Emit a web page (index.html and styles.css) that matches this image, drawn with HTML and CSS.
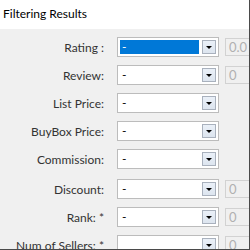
FILE: index.html
```html
<!DOCTYPE html>
<html>
<head>
<meta charset="utf-8">
<link rel="stylesheet" href="styles.css">
</head>
<body>
<div class="window">
  <div class="title">Filtering Results</div>
  <div class="panel">
    <div class="row">
      <span class="label">Rating :</span>
      <div class="combo"><span class="value selected">-</span><span class="btn"><i class="arrow"></i></span></div>
      <div class="box">0.0</div>
    </div>
    <div class="row">
      <span class="label">Review:</span>
      <div class="combo"><span class="value">-</span><span class="btn"><i class="arrow"></i></span></div>
      <div class="box">0</div>
    </div>
    <div class="row">
      <span class="label">List Price:</span>
      <div class="combo"><span class="value">-</span><span class="btn"><i class="arrow"></i></span></div>
    </div>
    <div class="row">
      <span class="label">BuyBox Price:</span>
      <div class="combo"><span class="value">-</span><span class="btn"><i class="arrow"></i></span></div>
    </div>
    <div class="row">
      <span class="label">Commission:</span>
      <div class="combo"><span class="value">-</span><span class="btn"><i class="arrow"></i></span></div>
    </div>
    <div class="row sep">
      <span class="label">Discount:</span>
      <div class="combo"><span class="value">-</span><span class="btn"><i class="arrow"></i></span></div>
      <div class="box">0</div>
    </div>
    <div class="row">
      <span class="label">Rank: *</span>
      <div class="combo"><span class="value">-</span><span class="btn"><i class="arrow"></i></span></div>
      <div class="box">0</div>
    </div>
    <div class="row">
      <span class="label">Num of Sellers: *</span>
      <div class="combo"><span class="value"></span><span class="btn"><i class="arrow"></i></span></div>
      <div class="box">0</div>
    </div>
  </div>
</div>
</body>
</html>
```
FILE: styles.css
```css
html, body {
  margin: 0;
  padding: 0;
  background: #f0f0f0;
}
.window {
  width: 250px;
  height: 250px;
  box-sizing: border-box;
  overflow: hidden;
  border-right: 1px solid #4a4a4a;
  border-bottom: 1px solid #4a4a4a;
  background: #f0f0f0;
  font-family: Lato, "Noto Sans", sans-serif;
  font-size: 12px;
  color: #1a1a1a;
}
.title {
  height: 29px;
  box-sizing: border-box;
  background: #ffffff;
  padding: 5px 0 0 3px;
  font-size: 12px;
  line-height: 17px;
  color: #000;
}
.panel {
  padding-top: 8px;
  display: flex;
  flex-direction: column;
  gap: 8px;
}
.row {
  display: flex;
  align-items: center;
  height: 20px;
}
.row.sep {
  margin-top: 2px;
}
.label {
  width: 104px;
  flex: none;
  text-align: right;
  color: #333;
  white-space: nowrap;
}
.combo {
  margin-left: 13px;
  width: 102px;
  height: 20px;
  flex: none;
  box-sizing: border-box;
  border: 1px solid #bcbcbc;
  background: #fff;
  display: flex;
  align-items: center;
  padding: 2px;
}
.value {
  flex: 1;
  height: 14px;
  line-height: 14px;
  padding-left: 2px;
  margin-right: 3px;
  color: #000;
}
.value.selected {
  background: #0078d7;
  color: #fff;
}
.btn {
  width: 14px;
  height: 14px;
  flex: none;
  box-sizing: border-box;
  border: 1px solid #a9b1bd;
  background: linear-gradient(#eaf0f8, #dde5ef);
  display: flex;
  align-items: center;
  justify-content: center;
}
.arrow {
  width: 0;
  height: 0;
  border-left: 3px solid transparent;
  border-right: 3px solid transparent;
  border-top: 3px solid #000;
}
.box {
  margin-left: 6px;
  width: 40px;
  height: 18px;
  flex: none;
  box-sizing: border-box;
  border: 1px solid #d2d2d2;
  color: #b0b0b0;
  padding-left: 3px;
  line-height: 16px;
  font-size: 13px;
}
```
